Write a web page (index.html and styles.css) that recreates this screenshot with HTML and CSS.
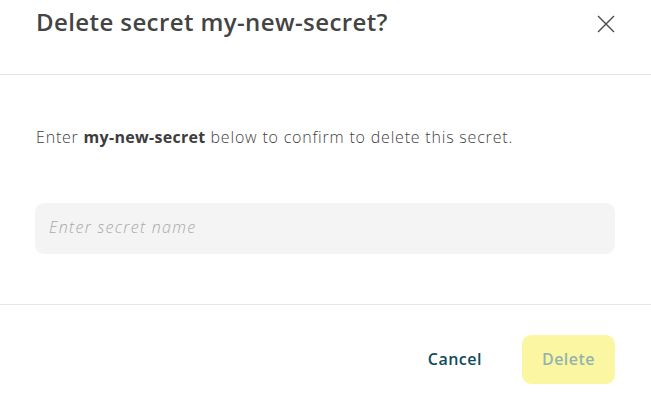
FILE: index.html
```html
<!DOCTYPE html>
<html>
<head>
<meta charset="utf-8">
<link rel="stylesheet" href="styles.css">
</head>
<body>
<div class="modal">
  <div class="header">
    <h2 class="title">Delete secret my-new-secret?</h2>
    <button class="close" aria-label="Close">
      <svg width="18" height="18" viewBox="0 0 18 18"><path d="M1 1 L17 17 M17 1 L1 17" stroke="#4a4a4a" stroke-width="1.4" fill="none"/></svg>
    </button>
  </div>
  <div class="body">
    <p class="msg">Enter <strong>my-new-secret</strong> below to confirm to delete this secret.</p>
    <input class="field" type="text" placeholder="Enter secret name">
  </div>
  <div class="footer">
    <button class="btn cancel">Cancel</button>
    <button class="btn delete" disabled>Delete</button>
  </div>
</div>
</body>
</html>
```
FILE: styles.css
```css
html, body { margin: 0; padding: 0; background: #fff; }
body { font-family: "Open Sans", "Noto Sans", sans-serif; color: #3a3a3a; }
.modal { width: 651px; }
.header {
  height: 74px;
  border-bottom: 1px solid #e6e6e6;
  display: flex;
  justify-content: space-between;
  align-items: flex-start;
  padding: 0 36px;
}
.title {
  margin: 6px 0 0;
  font-size: 24px;
  font-weight: 600;
  color: #444;
  line-height: 32px;
  letter-spacing: 0.4px;
}
.close {
  border: 0; background: none; padding: 0;
  margin: 15px 0 0 0;
  width: 18px; height: 18px;
  display: flex;
}
.body { padding: 0 36px 0 35px; height: 229px; }
.msg {
  margin: 0; padding-top: 51px;
  font-size: 16px; line-height: 22px;
  letter-spacing: 0.8px;
  color: #3f3f3f; font-weight: 300;
  padding-left: 1px;
}
.msg strong { font-weight: 700; letter-spacing: 0.3px; color: #3d3d3d; }
.field {
  display: block;
  margin-top: 55px;
  width: 580px; height: 51px;
  box-sizing: border-box;
  border: 0; border-radius: 9px;
  background: #f4f4f4;
  padding: 0 14px 4px;
  font-family: inherit; font-size: 16px;
  letter-spacing: 1.3px;
  outline: none;
}
.field::placeholder { color: #a8a8a8; font-style: italic; font-weight: 300; }
.footer {
  border-top: 1px solid #e6e6e6;
  display: flex;
  justify-content: flex-end;
  align-items: center;
  gap: 40px;
  padding: 30px 36px 0 0;
}
.btn {
  font-family: inherit; font-size: 16px; font-weight: 600;
  letter-spacing: 0.5px;
  border: 0; border-radius: 9px;
  height: 49px;
  padding-bottom: 3px;
}
.cancel { background: none; color: #0f4c5a; padding-left: 0; padding-right: 0; }
.delete { background: #fbf6a1; color: #93b3ad; width: 93px; }
```
